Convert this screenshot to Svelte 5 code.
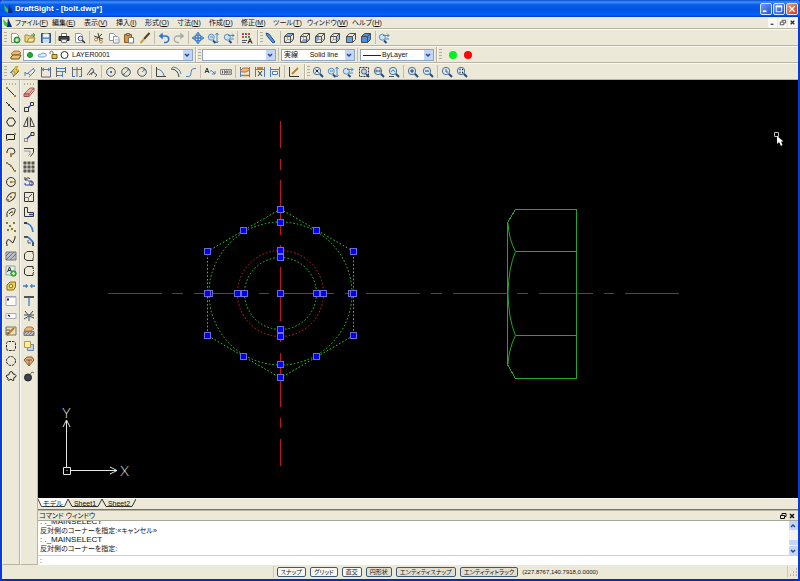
<script>
  // icon drawing helpers, every icon lives in a 12x12 box
  const p = (d, stroke = '#333', fill = 'none', w = 1) =>
    `<path d="${d}" stroke="${stroke}" fill="${fill}" stroke-width="${w}"/>`
  const c = (x, y, r, stroke = '#333', fill = 'none', w = 1) =>
    `<circle cx="${x}" cy="${y}" r="${r}" stroke="${stroke}" fill="${fill}" stroke-width="${w}"/>`
  const dots = (list, color = '#a5842c') =>
    list.map(([x, y]) => `<rect x="${x - 1}" y="${y - 1}" width="2" height="2" fill="${color}"/>`).join('')

  const BLUE = '#4a7fc4'
  const SKY = '#8fc0f0'

  const lens = (inner = '') => p('M7.8 7.8L11 11', '#1f4f86', 'none', 2) + c(5, 5, 3.7, '#54708c', '#d5e8f7') + inner
  const lensLow = (inner = '') => p('M6 8.5L8.5 11', '#1f4f86', 'none', 2) + c(4.3, 5.2, 3, '#5c8cba', '#cfe3f6') + inner
  const cube = (face, inside = true) =>
    face +
    p('M1.5 4.5h6v6h-6zM1.5 4.5l3-3h6v6l-3 3M7.5 4.5l3-3', '#4c4c4c') +
    (inside ? p('M4.5 1.5v6h6M1.5 10.5l3-3', '#8a8a8a', 'none', 0.7) : '')
  const dim = (inner = '') => p('M1.5 1v10M10.5 1v10M2 3.5h8', BLUE) + inner
  const hand = p('M1 5l3-3h5l2 2-4 2H3z', '#b0763c', '#e9b77d')

  const icons = {
    new: p('M2.5 1.5h5l2 2v7h-7z', '#999', '#fff') + c(8, 8, 3, '#238c2c', '#3fb548') + p('M8 6.3v3.4M6.3 8h3.4', '#fff'),
    open: p('M1 10V3h3l1 1h5v6z', '#a28a45', '#efd27c') + p('M3 10l2-4h6l-2 4z', '#a28a45', '#f8e6a4') + p('M7 3h3M9 1l2 2-2 2', '#3a9d3e'),
    save: p('M1.5 1.5h9v9h-9z', '#2b4f7d', '#5b8fca') + p('M3.5 2h5v3h-5z', '#dce8f4', '#fff') + p('M3.5 7.5h5v3h-5z', '#dce8f4', '#c8d8e8'),
    print: p('M3.5 1.5h5v3h-5z', '#777', '#fff') + p('M1 4.5h10v4H1z', '#222', '#444') + p('M3.5 7.5h5v3h-5z', '#777', '#e8eef4'),
    preview: p('M1.5 1.5h5l2 2v7h-7z', '#999', '#fff') + c(6.5, 6.5, 2.3, '#557', '#d6e8f8') + p('M8.3 8.3L11 11', '#333', 'none', 1.5),
    cut: p('M1 4l9 3M5 1l2 8', '#444') + c(3, 7.5, 1.5, '#b5814a') + c(8, 9.6, 1.5, '#b5814a') + p('M4 6.5L9 2', '#333'),
    copy: p('M1.5 1.5h4l2 2v5h-6z', '#8a94a4', '#fff') + p('M5.5 4.5h4l1.5 2v4.5H5.5z', '#8a94a4', '#fff') + p('M7 7.5h3M7 9h3', '#aaa', 'none', 0.6),
    paste: p('M1.5 2.5h7v8h-7z', '#8d5a22', '#d59646') + p('M3.5 1.5h3v2h-3z', '#666', '#bbb') + p('M5.5 5.5h5v5.5h-5z', '#777', '#fff'),
    brush: p('M10.5 1L5 7', '#54401c', 'none', 2) + p('M5 7l-3.5 4', '#d2a02c', 'none', 2),
    undo: p('M3 4h4.5a3 3 0 0 1 0 6.5H6', '#2f78cc', 'none', 1.6) + p('M4.5 1L1 4l3.5 3z', '#2f78cc', '#2f78cc', 0.5),
    redo: p('M9 4H4.5a3 3 0 0 0 0 6.5H6', '#a8aaa6', 'none', 1.3) + p('M7.5 1L11 4 7.5 7z', '#a8aaa6', '#a8aaa6', 0.5),
    pan: p('M6 0l2.5 3.5h-5zM6 12L3.500 8.500h5zM0 6l3.500-2.500v5zM12 6L8.500 8.500v-5z', '#2562a8', '#5a9be4', 0.6) + p('M6 3v6M3 6h6', '#3c7cc8', 'none', 1.5),
    zoomDyn: lensLow(p('M3 5h3M10 1v10M8.5 3L10 1l1.5 2M8.5 9l1.5 2L11.5 9', '#3a80cc', 'none', 0.9)),
    zoomPrev: lensLow(p('M5 3.5h6M9 1.5l2 2-2 2M7 7h4', '#3a80cc', 'none', 0.9)),
    props:
      dots([[2, 2], [5, 2]], '#a63c8a') + dots([[8, 2], [2, 5]], '#e05030') + dots([[5, 5], [8, 5]], '#4a9a3c') +
      p('M1 8.5h5M1 10.5h4', '#556') + p('M7 11.5l2-5 2 5M7.7 9.7h2.6', '#222'),
    pen: p('M1 1l3 1 6 8-2 1-6-7z', '#1f4f8c', '#5c96d8'),
    cubeTop: cube(p('M1.5 4.5l3-3h6l-3 3z', 'none', '#6fb0f2')),
    cubeBottom: cube(p('M1.5 10.5l3-3h6l-3 3z', 'none', '#6fb0f2')),
    cubeLeft: cube(p('M1.5 4.5l3-3v6l-3 3z', 'none', '#6fb0f2')),
    cubeRight: cube(p('M7.5 4.5l3-3v6l-3 3z', 'none', SKY)),
    cubeFront: cube(p('M1.5 4.5h6v6h-6z', 'none', '#62a4e8'), false),
    cubeBack: cube(p('M1.5 4.5l3-3h6v6l-3 3h-6z', 'none', '#4a8fe0'), false),
    layers: hand + p('M1 8l2-2h8l-2 4H1z', '#6a5228', '#e8c56c'),

    dimSmart: p('M1 7l5-5M4 11l6-6M2 6l3 4M6 2l3 4', BLUE) + p('M7 0L3 6h3l-2 5 6-7H7l2-4z', '#9a7a10', '#f2c83a', 0.6),
    dimAligned: p('M1 6l2 2 7-6M5 11l6-6M1 6v4M4 7l3 3M9 2l2 3', BLUE),
    dimLinear: p('M1.5 1v10h9V1', '#667') + p('M2 3.5h8M4 2L2 3.5 4 5M8 2l2 1.5L8 5', BLUE),
    dimBase: p('M1.5 11V1M10.5 1v6', '#667') + p('M2 2.5h8M2 5.5h8M2 9.5h5M7.5 6v5', BLUE),
    dimCont: p('M1.5 11V1M10.5 11V1M6 1v10', '#667') + p('M2 3.5h8M1 10.5h3M8 10.5h3', BLUE),
    dimJog: p('M1 9l5-7 2 3-5 4M5 9l2-3 4 3-2 2', '#556'),
    dimCenter: c(6, 6, 4.3, '#555') + dots([[6, 6]], '#2f70c8'),
    dimDiameter: c(6, 6, 4.3, '#555') + p('M3 9l6-6M3 7v2h2M9 5V3H7', BLUE),
    dimRadius: c(6, 6, 4.3, '#555') + p('M6 6l3-3M7 3h2v2', BLUE),
    dimAngle: p('M1.5 1v9.5H11', '#444') + p('M2 3q6 1 7 7', BLUE),
    dimArc: p('M1 3q7 0 8 8', '#444') + p('M3 1q7 1 8 7M1 3l2-2', BLUE),
    dimOrd: p('M1 10.5h3q2 0 2-4t3-4h2', BLUE),
    leader: p('M1 7l2-5 2 5M2 5.5h2', '#333') + p('M6 5q2-1 3 1l2 2M11 5v3H8', BLUE),
    tolerance: p('M.5 3.5h11v5H.5zM4.5 3.5v5M8 3.5v5', '#888') + c(6.3, 6, 1, '#555') + p('M2.5 4.5v3M10 4.5v3', '#555'),
    dimEdit: dim(hand) + p('M2 9.5h8', '#c07830', 'none', 1.5),
    dimText: dim(p('M4 5l4 5M8 5l-4 5', '#333')) + p('M3 2h6', '#c88438', 'none', 2),
    dimUpdate: dim(p('M3.5 5.5h5v3h-5z', BLUE, '#fff')),
    dimStyle: p('M1.5 1v9.5H11', '#333') + p('M4 8l6-6', '#b88428', 'none', 1.8),

    zoomAll: lens(p('M3.5 3.5l3 3M6.5 3.5l-3 3', '#223')),
    zoomWindow: '<path d="M1.5 1.5h9v9h-9z" stroke="#333" stroke-dasharray="2 1"/>' + c(6, 5.5, 2.6, '#557', '#b9d6ee') + p('M8 8l3 3', '#1f4f86', 'none', 1.8),
    zoomBounds: lens(p('M3 5h4M3 3.5v3M7 3.5v3', '#557')),
    zoomSel: lens(p('M3 6q2-4 4 0', '#3a80cc')) + p('M1 10.5h5', '#556'),
    zoomIn: lens(p('M5 3v4M3 5h4', '#1d3c64')),
    zoomOut: lens(p('M3 5h4', '#1d3c64')),
    zoomFactor: lens(p('M5 3v3h2', '#557')),
    zoomFit: lens(p('M3.5 3.5h1M6 3.5h1M3.5 6.5h1M6 6.5h1', '#222', 'none', 1.6)),

    line: p('M2 2l8 8', '#222') + dots([[2, 2], [10, 10]]),
    xline: p('M1 1l10 10', '#222') + dots([[4, 4], [8, 8]], '#444'),
    circle: p('M4 2h4l2.5 4L8 10H4L1.5 6z', '#222'),
    rect: p('M1.5 3.5h8v5h-8z', '#222') + dots([[2, 9], [10, 3]]),
    polyline: p('M2 6q0-4 4-4t4 4q-1 3-4 2', '#333') + dots([[2, 6], [6, 8], [6, 10]]),
    arc: p('M1.5 2q5 1 8 8', '#333') + dots([[2, 2], [6, 5], [10, 10]]),
    circ: c(6, 6, 4.5, '#333') + p('M6 6h4', '#777') + dots([[6, 6], [10, 6]]),
    ellipse: '<ellipse cx="6" cy="6" rx="5.3" ry="3" transform="rotate(-45 6 6)" stroke="#333" fill="none"/>' + dots([[3, 9], [6, 6], [10, 2]]),
    ellArc: p('M2 10q-1-5 4-7t4 2q0 3-4 5M4 8l3-3', '#333') + dots([[2, 10], [7, 6]]),
    points: dots([[2, 2], [5, 5], [9, 2], [3, 9], [7, 8], [10, 10]], '#8a7a30'),
    spline: p('M1.5 10q0-7 3-5t3 3 3-6', '#222') + dots([[2, 10], [10, 2]]),
    hatch: p('M1 2h10v8H1z', '#777', '#b9c0ca') + p('M1 6l4-4M1 10l8-8M5 10l6-6', '#555', 'none', 0.7),
    textAdd: p('M1 1h9v9H1z', '#8a9', '#e6ecee') + p('M2.5 7L4.5 2l2 5M3.2 5.5h2.6', '#333') + c(8.5, 8.5, 2.7, '#238c2c', '#58bd52') + p('M8.5 7v3M7 8.5h3', '#fff'),
    region: p('M2 5l3-3h5.5v5l-2 3H2z', '#8a6d14', '#f0d060') + c(6, 6, 1.8, '#8a6d14', '#fff1ae'),
    note: p('M1 1.5h10v9H1z', '#aab', '#fff') + p('M1 2h10', '#99a') + dots([[3, 4.5]], '#223'),
    field: p('M1 3.5h10v5H1z', '#aab', '#fff') + p('M3 5l2 1.5', '#223', 'none', 1.5),
    tableEdit: p('M1 2h10v8H1z', '#776', '#e8e0c0') + p('M2 10l7-7', '#b57a20', 'none', 2) + p('M1 5h4M1 8h3', '#555'),
    cloudRect: '<rect x="1.5" y="1.5" width="9" height="9" rx="2" stroke="#222" fill="none" stroke-dasharray="2.5 1"/>',
    cloudEll: '<circle cx="6" cy="6" r="4.5" stroke="#222" fill="none" stroke-dasharray="2.5 1"/>',
    cloudFree: p('M1.5 7q-1-2 1.500-2l1-.5q0-2.500 2-3 2 0 2 2.500 2.500 0 3 1.500 0 2-2 2l-.5 3q-1.500.5-2.500-1.500l-2.500 1.500q-1-1-.5-2.500z', '#222'),

    erase: p('M1 8l6-6h4l-5 6z', '#b05a58', '#f0b0a8') + p('M1 8h5v2.5H1z', '#a04c4c', '#e88a84') + p('M6 10.5l5-6V2', '#a04c4c'),
    copyEnt: p('M1.5 6.5h4v4h-4zM7.5 1.5h3v3h-3z', '#333') + p('M5 7l3-3', '#2a3fd0', 'none', 1.5),
    mirror: p('M4.5 1.5v9h-4zM7.5 1.5v9h4z', '#444') + p('M6 0v12', '#888', 'none', 0.6),
    move: '<rect x="1.5" y="7.5" width="3" height="3" stroke="#333" fill="none" stroke-dasharray="1 1"/>' + p('M4 7.5L8 4', '#2a3fd0', 'none', 1.5) + p('M8 1.5h3v3H8z', '#333'),
    offset: p('M1 2.5h9.5v4l-3 4', '#333') + p('M1 5h6M7 5v3l-2 2', '#999'),
    pattern: [1, 5, 9].map((x) => [1, 5, 9].map((y) => `<rect x="${x}" y="${y}" width="2" height="2" stroke="#222" stroke-width="0.8" fill="#bbb"/>`).join('')).join(''),
    rotate: p('M2 4q3-4 5-1M2 1v3h3', '#334') + p('M5 5h4v4H2V7', '#2a3fd0') + c(8.5, 7.5, 2, '#556'),
    scale: p('M1.5 1.5h9v9h-9z', '#333') + p('M1.5 6.5h4v4', '#777') + p('M6 6l3-3', '#2a3fd0'),
    stretch: p('M1.5 1.5h3v5h6v4h-9z', '#333') + p('M6 8.5h4', '#2a3fd0', 'none', 1.5),
    fillet: p('M1 2q8 0 9 9', '#3a80cc', 'none', 1.6) + p('M1 2h3', '#222', 'none', 1.5),
    chamfer: p('M1 2h4M10 7v4', '#222', 'none', 1.5) + p('M5 2l5 5', '#3a80cc', 'none', 1.8) + p('M5 5v3h3', '#556'),
    trim: p('M10 4V1.5H4L1.5 4v5L4 10.5h6V8', '#333') + p('M10.5 4v4', '#3a80cc'),
    extend: p('M10 4V1.5H4L1.5 4v5L4 10.5h6V8', '#333') + '<path d="M10.5 3v6" stroke="#2a3fd0" stroke-dasharray="1 1"/>',
    join: p('M0 6h4M12 6H8', '#3a80cc', 'none', 1.5) + p('M3 4l2 2-2 2zM9 4L7 6l2 2z', '#3a80cc', '#3a80cc', 0.5),
    split: p('M1 2h10', '#222', 'none', 1.5) + p('M6 3v8', '#3a80cc', 'none', 1.3),
    explode: p('M6 6L2 1M6 6l4-5M6 6l-5 3M6 6l5 2M6 6v5M1 5h10', '#444') + dots([[6, 6]], '#3a80cc'),
    editHatch: p('M1 6.5h10v4H1z', '#777', '#b9c0ca') + p('M1 9l2-2M3 10l3-3M6 10l3-3M9 10l2-2', '#555', 'none', 0.7) + hand,
    order: p('M4.5 4.5h6v6h-6z', '#6a86a8', '#bcd4ee') + p('M1.5 1.5h6v6h-6z', '#b09c3c', '#fbeea2'),
    editPoly: p('M1 5l3-3h5l2 3-5 6z', '#8a5a28', '#e5b078') + p('M3 5h6M6 5v5', '#444', 'none', 0.7),
    bomb: c(5, 7.5, 3.5, '#222', '#3c4450') + p('M7 4.5L9 2l2 1', '#96602a'),
  }

  const standardBar = ['new', 'open', 'save', '|', 'print', 'preview', '|', 'cut', 'copy', 'paste', 'brush', '|', 'undo', 'redo', '|', 'pan', 'zoomDyn', 'zoomPrev', '|', 'props']
  const viewBar = ['pen', '|', 'cubeTop', 'cubeBottom', 'cubeLeft', 'cubeRight', 'cubeFront', 'cubeBack', '|', 'zoomPrev']
  const dimBar = ['dimSmart', 'dimAligned', 'dimLinear', 'dimBase', 'dimCont', 'dimJog', '|', 'dimCenter', 'dimDiameter', 'dimRadius', '|', 'dimAngle', 'dimArc', 'dimOrd', '|', 'leader', 'tolerance', '|', 'dimEdit', 'dimText', 'dimUpdate', '|', 'dimStyle']
  const zoomBar = ['zoomAll', 'zoomDyn', 'zoomPrev', 'zoomWindow', 'zoomBounds', 'zoomSel', '|', 'zoomIn', 'zoomOut', '|', 'zoomFactor', 'zoomFit']
  const drawBar = ['line', 'xline', 'circle', 'rect', 'polyline', 'arc', 'circ', 'ellipse', 'ellArc', 'points', 'spline', 'hatch', 'textAdd', 'region', 'note', 'field', 'tableEdit', 'cloudRect', 'cloudEll', 'cloudFree']
  const modifyBar = ['erase', 'copyEnt', 'mirror', 'move', 'offset', 'pattern', 'rotate', 'scale', 'stretch', 'fillet', 'chamfer', 'trim', 'extend', 'join', 'split', 'explode', 'editHatch', 'order', 'editPoly', 'bomb']

  const menus = [
    ['ファイル', 'F'], ['編集', 'E'], ['表示', 'V'], ['挿入', 'I'], ['形式', 'O'], ['寸法', 'N'],
    ['作成', 'D'], ['修正', 'M'], ['ツール', 'T'], ['ウィンドウ', 'W'], ['ヘルプ', 'H'],
  ]

  const sheets = ['モデル', 'Sheet1', 'Sheet2']
  let activeSheet = $state('モデル')

  const history = [': ._MAINSELECT', '反対側のコーナーを指定:«キャンセル»', ': ._MAINSELECT', '反対側のコーナーを指定:']
  let command = $state(':')

  let toggles = $state([
    { label: 'スナップ', on: false },
    { label: 'グリッド', on: false },
    { label: '直交', on: false },
    { label: '円形状', on: true },
    { label: 'エンティティスナップ', on: true },
    { label: 'エンティティトラック', on: true },
  ])

  // selection grips, relative to the centre of the nut
  const grips = [
    [0, -84], [0, 84], [73, -42], [73, 42], [-73, -42], [-73, 42],
    [36, -63], [-37, -63], [36, 63], [-37, 63],
    [0, 0],
    ...[71, 43, 36].flatMap((r) => [[0, -r], [0, r], [-r, 0], [r, 0]]),
    [-73, 0], [73, 0],
  ]
</script>

{#snippet icon(name)}
  <svg class="icon" viewBox="0 0 12 12" fill="none" aria-hidden="true">{@html icons[name]}</svg>
{/snippet}

{#snippet bar(items, cls)}
  <div class="bar {cls}" role="toolbar">
    <span class="handle"></span>
    {#each items as item}
      {#if item === '|'}
        <span class="sep"></span>
      {:else}
        <button class="tool" aria-label={item}>{@render icon(item)}</button>
      {/if}
    {/each}
  </div>
{/snippet}

{#snippet logo()}
  <svg class="logo" viewBox="0 0 9 10" aria-hidden="true">
    <path d="M0 1l4 4v4L1 7z" fill="#3fc04a" />
    <path d="M5 0l4 9H4z" fill="#0a2a88" />
  </svg>
{/snippet}

{#snippet arrow()}
  <span class="drop"><svg viewBox="0 0 8 8"><path d="M2 3l2 2 2-2" fill="none" stroke="#2b4a80" stroke-width="1.5" /></svg></span>
{/snippet}

<div class="window">
  <header class="titlebar">
    {@render logo()}
    <h1>DraftSight - [bolt.dwg*]</h1>
    <div class="caption">
      <button aria-label="Minimize"><svg viewBox="0 0 11 11"><path d="M2 8h4" stroke="#fff" stroke-width="2" /></svg></button>
      <button aria-label="Maximize"><svg viewBox="0 0 11 11"><path d="M2.5 3v5.5h6V3M2 3h7" fill="none" stroke="#fff" /><path d="M2 2.5h7" stroke="#fff" stroke-width="2" /></svg></button>
      <button class="close" aria-label="Close"><svg viewBox="0 0 11 11"><path d="M2.5 2.5l6 6M8.5 2.5l-6 6" stroke="#fff" stroke-width="1.5" /></svg></button>
    </div>
  </header>

  <nav class="menubar">
    {@render logo()}
    <div class="menus">
      {#each menus as [name, key]}
        <button>{name}(<u>{key}</u>)</button>
      {/each}
    </div>
    <div class="doc-buttons">
      <button aria-label="Minimize drawing"><svg viewBox="0 0 10 10"><path d="M3 7h3" stroke="#444" stroke-width="1.5" /></svg></button>
      <button aria-label="Restore drawing"><svg viewBox="0 0 10 10"><path d="M2.5 4.5h4v3h-4zM4.5 4V2.5h4v3H7" fill="none" stroke="#444" /></svg></button>
      <button aria-label="Close drawing"><svg viewBox="0 0 10 10"><path d="M3 3l4 4M7 3L3 7" stroke="#333" stroke-width="1.5" /></svg></button>
    </div>
  </nav>

  <div class="row">
    {@render bar(standardBar, 'standard')}
    {@render bar(viewBar, 'view')}
  </div>

  <div class="row">
    <div class="bar layer-bar">
      <button class="tool" aria-label="layers">{@render icon('layers')}</button>
      <label class="combo">
        <svg class="layer-state" viewBox="0 0 44 12" aria-hidden="true">
          <circle cx="5" cy="6" r="2.5" fill="#1fae2c" stroke="#168a20" />
          <path d="M13 7q0-2 3-2 2-2 5 0 1 3-3 3h-4z" fill="#e4f1fb" stroke="#6a9cc8" />
          <path d="M25 5V3q1-2 3 0v2" fill="none" stroke="#775" />
          <path d="M27 5.5h5v4h-5z" fill="#e6c040" stroke="#775a14" />
          <circle cx="39.5" cy="6" r="3.5" fill="#fff" stroke="#333" />
        </svg>
        <select class="with-layer" aria-label="Layer"><option>LAYER0001</option></select>
        {@render arrow()}
      </label>
    </div>
    <div class="bar style-bar">
      <span class="handle"></span>
      <label class="combo"><select aria-label="Line colour"><option></option></select>{@render arrow()}</label>
      <span class="sep"></span>
      <label class="combo"><select aria-label="Line style"><option>実線&nbsp;&nbsp;&nbsp;&nbsp;&nbsp;&nbsp;Solid line</option></select>{@render arrow()}</label>
      <span class="sep"></span>
      <label class="combo">
        <span class="weight"></span>
        <select class="with-weight" aria-label="Line weight"><option>ByLayer</option></select>
        {@render arrow()}
      </label>
    </div>
    <div class="bar macro-bar">
      <span class="handle"></span>
      <button class="lamp green" aria-label="Run"></button>
      <button class="lamp red" aria-label="Stop"></button>
    </div>
  </div>

  <div class="row">
    {@render bar(dimBar, 'dims')}
    {@render bar(zoomBar, 'zooms')}
  </div>

  <main class="work">
    {#each [drawBar, modifyBar] as items}
      <div class="side" role="toolbar">
        <span class="handle"></span>
        <div class="side-tools">
          {#each items as item}
            <button class="tool" aria-label={item}>{@render icon(item)}</button>
          {/each}
        </div>
      </div>
    {/each}

    <section class="document">
      <div class="canvas">
        <svg viewBox="0 0 760 418" preserveAspectRatio="xMinYMin" role="img" aria-label="bolt.dwg">
          <g fill="none" stroke="#c01818" stroke-dasharray="54.2 10.7 10.65 10.7" shape-rendering="crispEdges">
            <path d="M69.5 213.5H641" />
            <path d="M242.5 41V386" stroke-dashoffset="26.9" />
          </g>

          <!-- side view of the head -->
          <g fill="none" stroke="#22a822">
            <path d="M477.5 129.5H538.5V298.5H477.5L469.5 284.5V142.5Z" shape-rendering="crispEdges" />
            <path d="M477.5 171.5H538.5M477.5 255.5H538.5" shape-rendering="crispEdges" />
            <path d="M470 143Q471 160 477.5 171.5Q470.5 188 470 213.5Q470.5 239 477.5 255.5Q471 268 470 284" />
          </g>

          <g transform="translate(242.5 213.5)">
            <g fill="none" stroke="#2fd02f" stroke-dasharray="1.6 2">
              <path d="M0-84.5L73-42V42L0 84.5L-73 42V-42Z" />
              <circle r="71.5" />
              <circle r="36" />
              <circle r="43" stroke="#d02424" />
            </g>
            {#each grips as [x, y]}
              <rect x={x - 3} y={y - 3} width="6" height="6" fill="#0000ee" stroke="#6c6cd8" />
            {/each}
          </g>

          <!-- coordinate system marker -->
          <g fill="none" stroke="#e4e4e4">
            <path d="M25.5 387.5h7v7h-7zM28.5 387V340.5M25 347l3.5-7 3.5 7M33 390.5H79M72 387l7 3.5-7 3.5" />
            <path d="M28.5 390.5h1" />
          </g>
          <g class="axis" fill="#e4e4e4" text-anchor="middle">
            <text x="28.5" y="338">Y</text>
            <text x="86.5" y="396">X</text>
          </g>

          <g transform="translate(736 52)">
            <path d="M.5 .5h4v4h-4z" fill="none" stroke="#bbb" />
            <path d="M3 4v8l2-2 2 4 1.5-1L7 9.5h2.5z" fill="#fff" />
          </g>
        </svg>
      </div>

      <div class="sheets" role="tablist">
        {#each sheets as sheet}
          <button role="tab" aria-selected={activeSheet === sheet} class:active={activeSheet === sheet} onclick={() => (activeSheet = sheet)}>
            <svg viewBox="0 0 34 9" preserveAspectRatio="none"><path d="M0 0L4 7.5H30L34 0" stroke="#333" /></svg>
            <span>{sheet}</span>
          </button>
        {/each}
      </div>

      <div class="command">
        <div class="command-title">
          <span>コマンド ウィンドウ</span>
          <button aria-label="Dock"><svg viewBox="0 0 8 8"><path d="M1.5 3.5h4v3h-4zM3 3V1.5h4v3H6" fill="none" stroke="#111" /></svg></button>
          <button aria-label="Close command window"><svg viewBox="0 0 8 8"><path d="M2 2l4 4M6 2L2 6" stroke="#111" stroke-width="1.5" /></svg></button>
        </div>
        <div class="history">
          <div class="lines">
            {#each history as entry}
              <p class:echo={entry.startsWith(':')}>{entry}</p>
            {/each}
          </div>
          <div class="scroll">
            <button aria-label="Scroll up"><svg viewBox="0 0 8 8"><path d="M2 5l2-2 2 2" fill="none" stroke="#2b4a80" stroke-width="1.5" /></svg></button>
            <span class="thumb"></span>
            <button aria-label="Scroll down"><svg viewBox="0 0 8 8"><path d="M2 3l2 2 2-2" fill="none" stroke="#2b4a80" stroke-width="1.5" /></svg></button>
          </div>
        </div>
        <input class="prompt" aria-label="Command" bind:value={command} />
      </div>
    </section>
  </main>

  <footer class="status">
    <div class="toggles">
      {#each toggles as t}
        <button class:on={t.on} aria-pressed={t.on} onclick={() => (t.on = !t.on)}>{t.label}</button>
      {/each}
      <output>(227.8767,140.7918,0.0000)</output>
    </div>
    <svg class="grip" viewBox="0 0 10 10" aria-hidden="true">
      <path d="M8 2h1M8 5h1M8 8h1M5 5h1M5 8h1M2 8h1" stroke="#a8a490" stroke-width="1.5" />
    </svg>
  </footer>
</div>

<style>
  :global(body) {
    margin: 0;
    background: #0a3ad0;
  }

  .window {
    box-sizing: border-box;
    min-height: 100vh;
    display: flex;
    flex-direction: column;
    border: 2px solid #0a3ad8;
    border-top: none;
    border-bottom: 3px solid #0a2cb4;
    background: #ece9d8;
    color: #111;
    font: 7px/9px "Liberation Sans", "Noto Sans CJK JP", sans-serif;
    font-feature-settings: "palt";
  }

  button, select, input {
    font: inherit;
    font-feature-settings: inherit;
    color: inherit;
    margin: 0;
    padding: 0;
    border: none;
    background: none;
    border-radius: 0;
  }

  svg { display: block; }

  .logo {
    width: 9px;
    height: 10px;
    flex-shrink: 0;
  }

  .titlebar {
    height: 17px;
    display: flex;
    align-items: center;
    gap: 2px;
    margin: 0 -2px;
    padding: 1px 2px 0 4px;
    box-sizing: border-box;
    background: linear-gradient(#0a4ccc, #3c92ff 12%, #0a5ae8 28%, #0054e3 60%, #0062fa 88%, #0038b4);
    border-radius: 4px 4px 0 0;
  }
  h1 {
    flex: 1;
    margin: 0;
    font-size: 8px;
    line-height: 10px;
    color: #fff;
  }
  .caption { display: flex; gap: 1px; }
  .caption button {
    width: 12px;
    height: 12px;
    box-sizing: border-box;
    border: 1px solid #dbe6fa;
    border-radius: 2px;
    background: linear-gradient(135deg, #6f9bf4, #1e52d4);
  }
  .caption .close { background: linear-gradient(135deg, #f09a80, #cc3a14); }

  .menubar {
    height: 12px;
    box-sizing: border-box;
    display: flex;
    align-items: center;
    gap: 3px;
    padding-left: 1px;
    border-bottom: 1px solid #b8b5a4;
  }
  .menus {
    flex: 1;
    display: grid;
    grid-template-columns: 37px 32px 32px 29px 32px 32px 32px 32px 34px 45px 32px;
  }
  .menus button { text-align: left; white-space: nowrap; }
  .doc-buttons { display: flex; }
  .doc-buttons button {
    width: 10px;
    height: 10px;
    background: #f8f7f2;
    border-right: 1px solid #ece9d8;
    box-sizing: border-box;
  }

  .row {
    height: 17px;
    box-sizing: border-box;
    display: flex;
    border-top: 1px solid #faf9f4;
    border-bottom: 1px solid #b8b5a4;
  }
  .bar {
    display: flex;
    align-items: center;
    justify-content: space-between;
    box-sizing: border-box;
    padding: 0 2px;
    border-right: 1px solid #b8b5a4;
    box-shadow: 1px 0 #faf9f4;
  }
  .standard { width: 256px; }
  .view { width: 136px; }
  .dims { width: 303px; }
  .zooms { width: 167px; }
  .view, .zooms, .macro-bar { border-right: none; box-shadow: none; }

  .handle {
    width: 3px;
    height: 11px;
    flex-shrink: 0;
    background: repeating-linear-gradient(#b4b09e 0 1px, transparent 1px 3px);
  }
  .sep {
    width: 1px;
    height: 13px;
    margin: 0 1px;
    background: #c0bdac;
  }
  .tool {
    flex: 0 1 15px;
    min-width: 0;
    display: flex;
    align-items: center;
    justify-content: center;
  }
  .icon { width: 12px; height: 12px; flex-shrink: 0; }

  .layer-bar { width: 194px; padding-left: 6px; }
  .style-bar { width: 241px; gap: 1px; }
  .macro-bar { gap: 5px; }
  .combo {
    position: relative;
    flex: 1;
    height: 12px;
    box-sizing: border-box;
    display: flex;
    border: 1px solid #8ea6c4;
    background: #fff;
  }
  .combo select {
    flex: 1;
    min-width: 0;
    appearance: none;
    padding-left: 2px;
    font-size: 7px;
    line-height: 10px;
    outline: none;
  }
  .combo .with-layer { padding-left: 48px; }
  .combo .with-weight { padding-left: 21px; }
  .layer-state {
    position: absolute;
    left: 1px;
    top: -1px;
    width: 44px;
    height: 12px;
  }
  .weight {
    position: absolute;
    left: 2px;
    top: 5px;
    width: 18px;
    height: 1px;
    background: #222;
  }
  .drop {
    width: 9px;
    background: #c4d5fb;
    pointer-events: none;
  }
  .drop svg { width: 8px; height: 10px; }

  .lamp {
    width: 8px;
    height: 8px;
    border-radius: 50%;
    margin-left: 2px;
  }
  .green { background: #00f020; }
  .red { background: #f80808; }

  .work {
    flex: 1;
    display: grid;
    grid-template-columns: 18px 18px minmax(0, 1fr);
  }
  .side {
    display: flex;
    flex-direction: column;
    align-items: center;
    box-sizing: border-box;
    padding-top: 3px;
    border-right: 1px solid #b8b5a4;
    border-left: 1px solid #faf9f4;
    border-bottom: 1px solid #b8b5a4;
  }
  .side .handle {
    width: 11px;
    height: 2px;
    background: repeating-linear-gradient(90deg, #b4b09e 0 1px, transparent 1px 3px);
  }
  .side-tools {
    height: 298px;
    display: grid;
    grid-auto-rows: 1fr;
  }

  .document {
    display: flex;
    flex-direction: column;
    min-width: 0;
  }
  .canvas {
    flex: 1;
    min-height: 418px;
    background: #000;
  }
  .canvas svg { width: 100%; }
  .axis {
    font: 300 14px Lato, sans-serif;
  }

  .sheets {
    display: flex;
    height: 11px;
    border-top: 1px solid #faf9f4;
    box-sizing: border-box;
  }
  .sheets button {
    position: relative;
    width: 34px;
    height: 9px;
  }
  .sheets button:first-child { width: 30px; }
  .sheets svg {
    position: absolute;
    inset: 0;
    width: 100%;
    height: 100%;
    fill: #ece9d8;
  }
  .sheets .active svg { fill: #fff; }
  .sheets span {
    position: relative;
    display: block;
    line-height: 8px;
  }

  .command { border-top: 1px solid #77756a; }
  .command-title {
    display: flex;
    align-items: center;
    height: 11px;
    box-sizing: border-box;
    padding: 0 2px 0 1px;
    gap: 1px;
    border-top: 1px solid #b8b5a4;
    border-bottom: 1px solid #aca899;
  }
  .command-title span { flex: 1; }
  .command-title button, .command-title svg { width: 8px; height: 8px; }

  .history {
    display: flex;
    height: 34px;
    background: #fff;
    border-bottom: 1px solid #c8d4e4;
  }
  .lines {
    flex: 1;
    display: flex;
    flex-direction: column;
    justify-content: flex-end;
    overflow: hidden;
    padding: 0 2px 2px;
  }
  .lines p {
    margin: 0;
    flex-shrink: 0;
  }
  .lines .echo { font-size: 8px; }

  .scroll {
    width: 9px;
    display: flex;
    flex-direction: column;
    background: #f4f3ee;
  }
  .scroll button, .thumb {
    height: 9px;
    background: #c4d5fb;
    border-radius: 1px;
  }
  .scroll svg { width: 8px; height: 8px; }
  .thumb {
    height: 5px;
    margin: auto 0 1px;
  }
  .prompt {
    display: block;
    width: 100%;
    height: 9px;
    box-sizing: border-box;
    padding-left: 2px;
    background: #fff;
    outline: none;
  }

  .status {
    height: 14px;
    display: flex;
    align-items: center;
    justify-content: flex-end;
  }
  .toggles {
    flex: 1;
    display: flex;
    align-items: center;
    gap: 4px;
    height: 12px;
    box-sizing: border-box;
    margin-left: 34%;
    padding-left: 3px;
    border-left: 1px solid #cbc8b8;
    border-right: 1px solid #cbc8b8;
    font-size: 6px;
    line-height: 8px;
  }
  .toggles button {
    height: 10px;
    box-sizing: border-box;
    padding: 0 3px;
    border: 1px solid #3c5a78;
    border-radius: 2px;
    background: #f8f7f2;
    white-space: nowrap;
  }
  .toggles .on { background: #e2dfd2; }
  .grip { width: 10px; height: 10px; }
</style>
